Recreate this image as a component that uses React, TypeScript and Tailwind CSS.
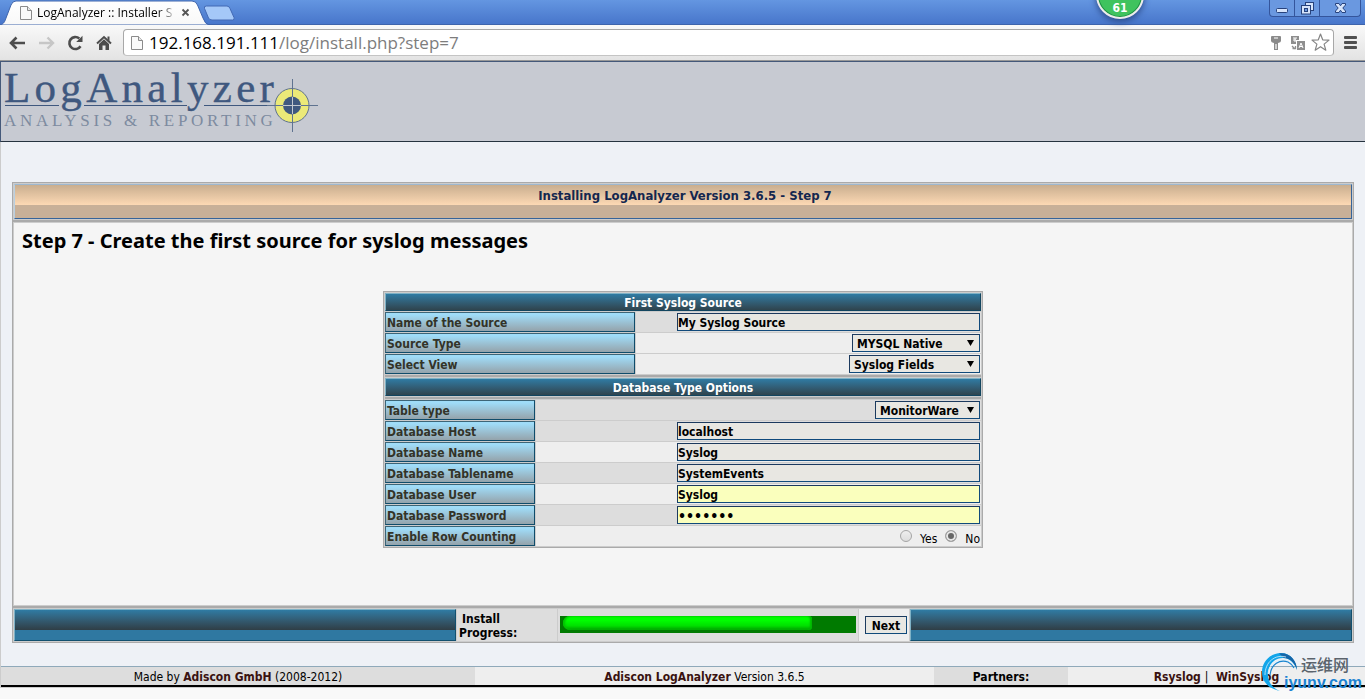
import React from "react";

const labelBox =
  "flex items-center border border-t-[#3d6577] border-l-[#3d6577] border-b-[#0f4c6b] border-r-[#0f4c6b] bg-linear-to-b from-[#9fdcf8] from-10% to-[#94a3ab] pt-[2px] pl-px font-bold text-[#333328]";
const fieldBox =
  "h-[18px] rounded-none border border-t-[#1c3a5e] border-l-[#1c3a5e] border-b-[#104a7b] border-r-[#104a7b] pt-px font-bold text-black outline-none";

function PageIcon() {
  return (
    <svg width="12" height="14" viewBox="0 0 12 14" className="shrink-0">
      <path d="M.5.5h7l4 4v9H.5z" fill="#fafafa" stroke="#8b8b8b" />
      <path d="M7.500.5v4h4" fill="#e8e8e8" stroke="#8b8b8b" />
    </svg>
  );
}

function TitleBar() {
  return (
    <div className="relative flex h-[25px] items-start justify-between border-b border-[#3e64ac] bg-linear-to-b from-[#6496e1] to-[#4876cb]">
      <div className="relative flex h-[25px] w-[208px] items-center pl-5">
        <svg className="absolute top-0 left-0" width="236" height="25" viewBox="0 0 236 25">
          <defs>
            <linearGradient id="tab" x1="0" y1="0" x2="0" y2="1">
              <stop offset="0" stopColor="#ffffff" />
              <stop offset="1" stopColor="#f8f8f8" />
            </linearGradient>
          </defs>
          <path
            d="M0 25C4 24 5 21 6 18L11 5Q12.500 1 16 1H192Q196 1 197.500 5L203 18Q205 24 209 25Z"
            fill="url(#tab)"
            stroke="#3e64ac"
          />
          <path
            d="M206.500 6H227Q229 6 230 8.500L234 17.500Q235 20 232.500 20H212Q209.500 20 208.500 18L204.500 8.500Q203.500 6 206.500 6Z"
            fill="#a5c8f8"
            stroke="#4269b4"
          />
        </svg>
        <div className="relative flex items-center gap-[5px]">
          <PageIcon />
          <span className="w-[138px] overflow-hidden bg-linear-to-r from-black from-85% to-[#ddd] bg-clip-text text-xs whitespace-nowrap text-transparent">
            LogAnalyzer :: Installer S
          </span>
        </div>
        <button aria-label="Close tab" className="relative ml-[6px]">
          <svg width="9" height="9" viewBox="0 0 9 9">
            <path d="M1.500 1.500l6 6M7.500 1.500l-6 6" stroke="#555" strokeWidth="1.800" />
          </svg>
        </button>
      </div>
      <div className="mr-1 flex h-[17px] rounded-b-sm border border-t-0 border-[#34559c] bg-[#6a98e0] text-[#dce8fb]">
        <button aria-label="Minimize" className="flex w-[25px] items-center justify-center border-r border-[#34559c]">
          <svg width="13" height="14" viewBox="0 0 13 14">
            <rect x="0.500" y="7.500" width="11" height="4" rx="1" fill="#d6e4fb" stroke="#27427c" />
          </svg>
        </button>
        <button aria-label="Restore" className="flex w-[25px] items-center justify-center border-r border-[#34559c]">
          <svg width="13" height="14" viewBox="0 0 13 14">
            <rect x="4.500" y="1.500" width="8" height="8" fill="#d6e4fb" stroke="#27427c" />
            <rect x="0.500" y="4.500" width="9" height="8.500" fill="#d6e4fb" stroke="#27427c" />
            <rect x="3.500" y="7.500" width="3" height="3" fill="#6a98e0" stroke="#27427c" />
          </svg>
        </button>
        <button aria-label="Close" className="flex w-10 items-center justify-center">
          <svg width="13" height="14" viewBox="0 0 13 14">
            <path
              d="M1.500 2.500H5L6.500 4.800L8 2.500H11.500V4L8.800 7L11.500 10V11.500H8L6.500 9.200L5 11.500H1.500V10L4.200 7L1.500 4Z"
              fill="#d6e4fb"
              stroke="#27427c"
            />
          </svg>
        </button>
      </div>
    </div>
  );
}

function Toolbar() {
  return (
    <div className="flex h-9 items-center border-b border-[#989898] bg-linear-to-b from-[#f9f9f9] to-[#e3e3e3] pr-2 pl-[9px]">
      <button aria-label="Back">
        <svg width="17" height="14" viewBox="0 0 17 14">
          <path d="M2 7h14M7.500 1.500L2 7l5.500 5.500" fill="none" stroke="#4d4d4d" strokeWidth="2.600" />
        </svg>
      </button>
      <button aria-label="Forward" className="ml-3">
        <svg width="17" height="14" viewBox="0 0 17 14">
          <path d="M1 7h14M9.500 1.500L15 7l-5.500 5.500" fill="none" stroke="#c6c6c6" strokeWidth="2.400" />
        </svg>
      </button>
      <button aria-label="Reload" className="ml-3">
        <svg width="17" height="16" viewBox="0 0 17 16">
          <path d="M13.500 11.200A6 6 0 1 1 12.300 3.500" fill="none" stroke="#4d4d4d" strokeWidth="2.600" />
          <path d="M15.500.800V7H9.200z" fill="#4d4d4d" />
        </svg>
      </button>
      <button aria-label="Home" className="ml-3">
        <svg width="16" height="16" viewBox="0 0 16 16">
          <path d="M1 8.500L8 2l7 6.500" fill="none" stroke="#4d4d4d" strokeWidth="2" />
          <path d="M11.500 1.500H13.500V6l-2-1.800zM3 9l5-4.700L13 9v6H9.500v-4.500h-3V15H3z" fill="#4d4d4d" />
        </svg>
      </button>
      <div className="ml-[11px] flex h-[27px] flex-1 items-center rounded-sm border border-[#a8a8a8] border-b-[#c4c4c4] bg-white pr-[3px] pl-[7px]">
        <PageIcon />
        <p className="ml-[6px] flex-1 text-[17px] leading-6 text-[#7d7d7d]">
          <span className="text-black">192.168.191.111</span>/log/install.php?step=7
        </p>
        <svg width="10" height="16" viewBox="0 0 10 16">
          <path d="M1 1h8q1 0 1 1v4q0 1.500-3 2v7H3V8Q0 7.500 0 6V2q0-1 1-1z" fill="#8a8a8a" />
          <path d="M3 3h4M5 9v5" stroke="#fff" strokeWidth="1.200" />
        </svg>
        <svg className="ml-[10px]" width="14" height="14" viewBox="0 0 14 14">
          <path d="M0 0h8v4H5v4H0zM6 5h8v9H6z" fill="#8e8e8e" />
          <path d="M2 2h4M4 2v4M2 4h3M8 12l2-5 2 5M8.800 10.500h2.400" stroke="#fff" fill="none" />
          <path d="M1 10l3 3M1.500 12.500h3V10" stroke="#8e8e8e" fill="none" strokeWidth="1.300" />
        </svg>
        <button aria-label="Bookmark" className="ml-[6px]">
          <svg width="19" height="19" viewBox="0 0 19 19">
            <path
              d="M9.500 1l2.200 5.800 6.300.300-4.900 4 1.700 6.100-5.300-3.500-5.300 3.500 1.700-6.100L1 7.100l6.300-.300z"
              fill="#fff"
              stroke="#858585"
              strokeWidth="1.200"
              strokeLinejoin="round"
            />
          </svg>
        </button>
      </div>
      <button aria-label="Menu" className="ml-[10px]">
        <svg width="13" height="13" viewBox="0 0 13 13">
          <path d="M1 1.500h11M1 6.500h11M1 11.500h11" stroke="#505050" strokeWidth="2.800" strokeLinecap="round" />
        </svg>
      </button>
    </div>
  );
}

function Logo() {
  return (
    <svg width="320" height="74" viewBox="1 0 320 74" fontFamily="'Liberation Serif', serif">
      <text x="4" y="40" fontSize="43" letterSpacing="4.300" fill="#3f587f" stroke="#3f587f" strokeWidth="0.400">
        LogAnalyzer
      </text>
      <text x="4" y="64" fontSize="17" letterSpacing="3.700" fill="#7d8ba0">
        ANALYSIS &amp; REPORTING
      </text>
      <path d="M5 43.500H59M84 43.500H187M204 43.500H272" stroke="#3f587f" />
      <circle cx="292" cy="43.500" r="17" fill="#ebe978" stroke="#5f7390" strokeWidth="1" />
      <circle cx="292" cy="43.500" r="9" fill="#3f587f" />
      <path d="M267 43.500h16M301 43.500h17M292.500 17v18M292.500 52v18" stroke="#5f7390" />
      <path d="M283 43.500h18M292.500 35v17" stroke="#c3c8d0" />
    </svg>
  );
}

function SectionHeader({ children }: { children: React.ReactNode }) {
  return (
    <h2 className="h-[18px] border border-t-[#7fb2c6] border-l-[#7fb2c6] border-b-[#12455f] border-r-[#12455f] bg-linear-to-b from-[#2f7ba3] to-[#2f444e] text-center leading-[18px] font-bold text-white">
      {children}
    </h2>
  );
}

function Rule() {
  return <div className="h-1 border-y border-[#ccc] bg-[#aaa]" />;
}

type RowProps = { id: string; label: string; wide?: boolean; dark?: boolean; children: React.ReactNode };

function Row({ id, label, wide, dark, children }: RowProps) {
  return (
    <div className="flex h-5 gap-px">
      <label htmlFor={id} className={`${labelBox} ${wide ? "w-[250px]" : "w-[150px]"}`}>
        {label}
      </label>
      <div className={`flex flex-1 items-center justify-end pr-px ${dark ? "bg-[#ddd]" : "bg-[#eee]"}`}>{children}</div>
    </div>
  );
}

type TextProps = { id: string; value: string; type?: string; filled?: boolean };

function TextField({ id, value, type = "text", filled }: TextProps) {
  return (
    <input
      id={id}
      type={type}
      defaultValue={value}
      className={`${fieldBox} w-[303px] ${type === "password" ? "text-sm" : "text-xs"} ${filled ? "bg-[#faffbd]" : "bg-[#e8e7e2]"}`}
    />
  );
}

function Select({ id, value, width }: { id: string; value: string; width: string }) {
  return (
    <div className={`relative flex ${width}`}>
      <select id={id} className={`${fieldBox} w-full appearance-none bg-[#e8e7e2] pl-1`}>
        <option>{value}</option>
      </select>
      <svg className="pointer-events-none absolute top-[6px] right-[6px]" width="7" height="6" viewBox="0 0 7 6">
        <path d="M0 0h7L3.500 6z" fill="#000" />
      </svg>
    </div>
  );
}

function Radio({ id, label, checked }: { id: string; label: string; checked?: boolean }) {
  return (
    <>
      <input
        id={id}
        type="radio"
        name="rowcount"
        defaultChecked={checked}
        className="mr-2 size-3 appearance-none rounded-full border border-[#a5a5a5] bg-linear-to-b from-[#eee] to-[#ddd] checked:bg-none checked:bg-[#666] checked:shadow-[inset_0_0_0_2px_#e6e6e6]"
      />
      <label htmlFor={id} className="pt-[6px]">
        {label}
      </label>
    </>
  );
}

function SourceForm() {
  return (
    <form className="mx-auto w-[600px] border border-[#aaa] bg-[#ccc] p-px">
      <SectionHeader>First Syslog Source</SectionHeader>
      <div className="flex flex-col gap-px pt-px">
        <Row id="name" label="Name of the Source" wide dark>
          <TextField id="name" value="My Syslog Source" />
        </Row>
        <Row id="type" label="Source Type" wide>
          <Select id="type" value="MYSQL Native" width="w-32" />
        </Row>
        <Row id="view" label="Select View" wide>
          <Select id="view" value="Syslog Fields" width="w-[131px]" />
        </Row>
      </div>
      <Rule />
      <SectionHeader>Database Type Options</SectionHeader>
      <Rule />
      <div className="flex flex-col gap-px">
        <Row id="table" label="Table type" dark>
          <Select id="table" value="MonitorWare" width="w-[105px]" />
        </Row>
        <Row id="host" label="Database Host" dark>
          <TextField id="host" value="localhost" />
        </Row>
        <Row id="db" label="Database Name">
          <TextField id="db" value="Syslog" />
        </Row>
        <Row id="tablename" label="Database Tablename" dark>
          <TextField id="tablename" value="SystemEvents" />
        </Row>
        <Row id="user" label="Database User">
          <TextField id="user" value="Syslog" filled />
        </Row>
        <Row id="password" label="Database Password" dark>
          <TextField id="password" value="dbsyslg" type="password" filled />
        </Row>
        <Row id="count-no" label="Enable Row Counting">
          <Radio id="count-yes" label="Yes" />
          <span className="w-2" />
          <Radio id="count-no" label="No" checked />
        </Row>
      </div>
    </form>
  );
}

function BlueBar() {
  return (
    <div className="flex-1 border border-t-[#7fb2c6] border-l-[#7fb2c6] border-b-[#12506f] border-r-[#12506f] bg-[#2f78a1]">
      <div className="h-5 bg-linear-to-b from-[#2f7ba3] to-[#2f3e46]" />
    </div>
  );
}

function ProgressRow() {
  return (
    <div className="flex h-8 gap-px bg-[#ccc] px-px">
      <BlueBar />
      <div className="w-[100px] bg-[#ddd] pt-[3px] pl-[2px] leading-[14px] font-bold">
        <span className="pl-[3px]">Install</span>
        <br />
        Progress:
      </div>
      <div className="w-[300px] bg-[#ddd] px-[2px] pt-[7px]">
        <div className="h-[17px] bg-[#007a00] pl-[3px]" role="progressbar" aria-label="Install Progress" aria-valuenow={85}>
          <div className="h-[14px] w-[85%] rounded-r-sm rounded-l-lg bg-linear-to-b from-[#00ff00] from-30% via-[#00e000] via-70% to-[#00a000] shadow-[inset_2px_0_2px_#00c400,inset_-2px_0_2px_#00b400]" />
        </div>
      </div>
      <div className="w-[50px] bg-[#eee] pt-[7px] pl-[6px]">
        <button className={`${fieldBox} w-[42px] bg-[#e8e7e2] leading-4`}>Next</button>
      </div>
      <BlueBar />
    </div>
  );
}

function Watermark() {
  return (
    <div className="pointer-events-none absolute top-[652px] right-0 h-10 w-[105px]">
      <svg className="absolute top-0 left-0" width="40" height="40" viewBox="0 0 40 40">
        <path
          d="M20 39C9 37 2 30 2 20C2 9 11 1 21 1C30 1 36 8 37 18C34 10 29 6 23 6C14 6 8 13 8 22C8 30 12 36 20 39z"
          fill="#11a5ea"
        />
        <path d="M19 1.500C30 0 37 9 37 18C35 11 30 6 24 6Z" fill="#1565a8" />
        <path d="M5 23C5 10 15 2 26 5M8 22C9 11 19 5 29 9" fill="none" stroke="#d4edfa" strokeWidth="0.800" />
        <path d="M10 23C11 12 20 7 28 10Q32 12 34 16" fill="none" stroke="#1784cf" strokeWidth="1.200" />
      </svg>
      <span className="absolute top-[3px] left-[41px] font-['Noto_Sans_CJK_SC',sans-serif] text-base leading-[18px] font-medium text-[#5b636c]">
        运维网
      </span>
      <span className="absolute top-[23px] left-6 font-['Liberation_Sans',sans-serif] text-base leading-4 font-bold text-[#1a82d2]">
        iyunv.com
      </span>
    </div>
  );
}

export default function App() {
  return (
    <div className="relative min-h-screen overflow-hidden bg-[#f9f9f9] font-['DejaVu_Sans_Condensed','DejaVu_Sans',sans-serif] text-xs text-black">
      <div className="font-['Open_Sans',sans-serif]">
        <TitleBar />
        <Toolbar />
      </div>
      <div className="absolute -top-[29px] left-[1096px] flex size-12 items-end justify-center rounded-full border-2 border-[#ececec] bg-[#3fc35e] pb-px font-bold text-white shadow-[0_3px_6px_#2f4f90,inset_0_0_0_1px_#1f8f45]">
        61
      </div>

      <header className="h-[81px] border border-t-[#45597a] border-r-0 border-b-[#26333f] border-l-[#45597a] bg-[#c7cad2]">
        <Logo />
      </header>

      <div className="border-b border-l border-[#ccc] bg-[#eef1f6] pt-10">
        <main className="mx-[11px] border border-[#aaa] bg-[#ccc]">
          <div className="px-px pt-px">
            <h1 className="h-[35px] border border-t-[#9db8d0] border-r-[#36649a] border-b-[#36649a] border-l-[#b9cfe0] bg-[#c8b098] text-center text-[13px] font-bold text-[#13274f]">
              <span className="block h-5 bg-linear-to-b from-[#c9ae8f] to-[#fdd9b4] pl-1 leading-[21px]">
                Installing LogAnalyzer Version 3.6.5 - Step 7
              </span>
            </h1>
          </div>
          <Rule />
          <section className="border-x border-[#ccc] bg-[#f5f5f5] px-2 pt-1 pb-[57px]">
            <h2 className="mb-[36px] font-['Noto_Sans',sans-serif] text-xl leading-7 font-bold">
              Step 7 - Create the first source for syslog messages
            </h2>
            <SourceForm />
          </section>
          <Rule />
          <ProgressRow />
          <div className="h-px bg-[#ccc]" />
        </main>

        <footer className="mt-[23px] flex h-[21px] border-t border-b-2 border-t-[#8fa9ba] border-b-black bg-[#eee] text-center leading-5">
          <div className="flex-[474] bg-[#ddd]">
            Made by <b className="text-[#3a1210]">Adiscon GmbH</b> (2008-2012)
          </div>
          <div className="flex-[459]">
            <b className="text-[#3a1210]">Adiscon LogAnalyzer</b> Version 3.6.5
          </div>
          <div className="flex-[134] bg-[#ddd] font-bold">Partners:</div>
          <div className="flex-[297]">
            <a href="#rsyslog" className="font-bold text-[#3a1210]">
              Rsyslog
            </a>
            <span className="mx-1">|</span>{" "}
            <a href="#winsyslog" className="font-bold text-[#3a1210]">
              WinSyslog
            </a>
          </div>
        </footer>
      </div>
      <Watermark />
    </div>
  );
}
